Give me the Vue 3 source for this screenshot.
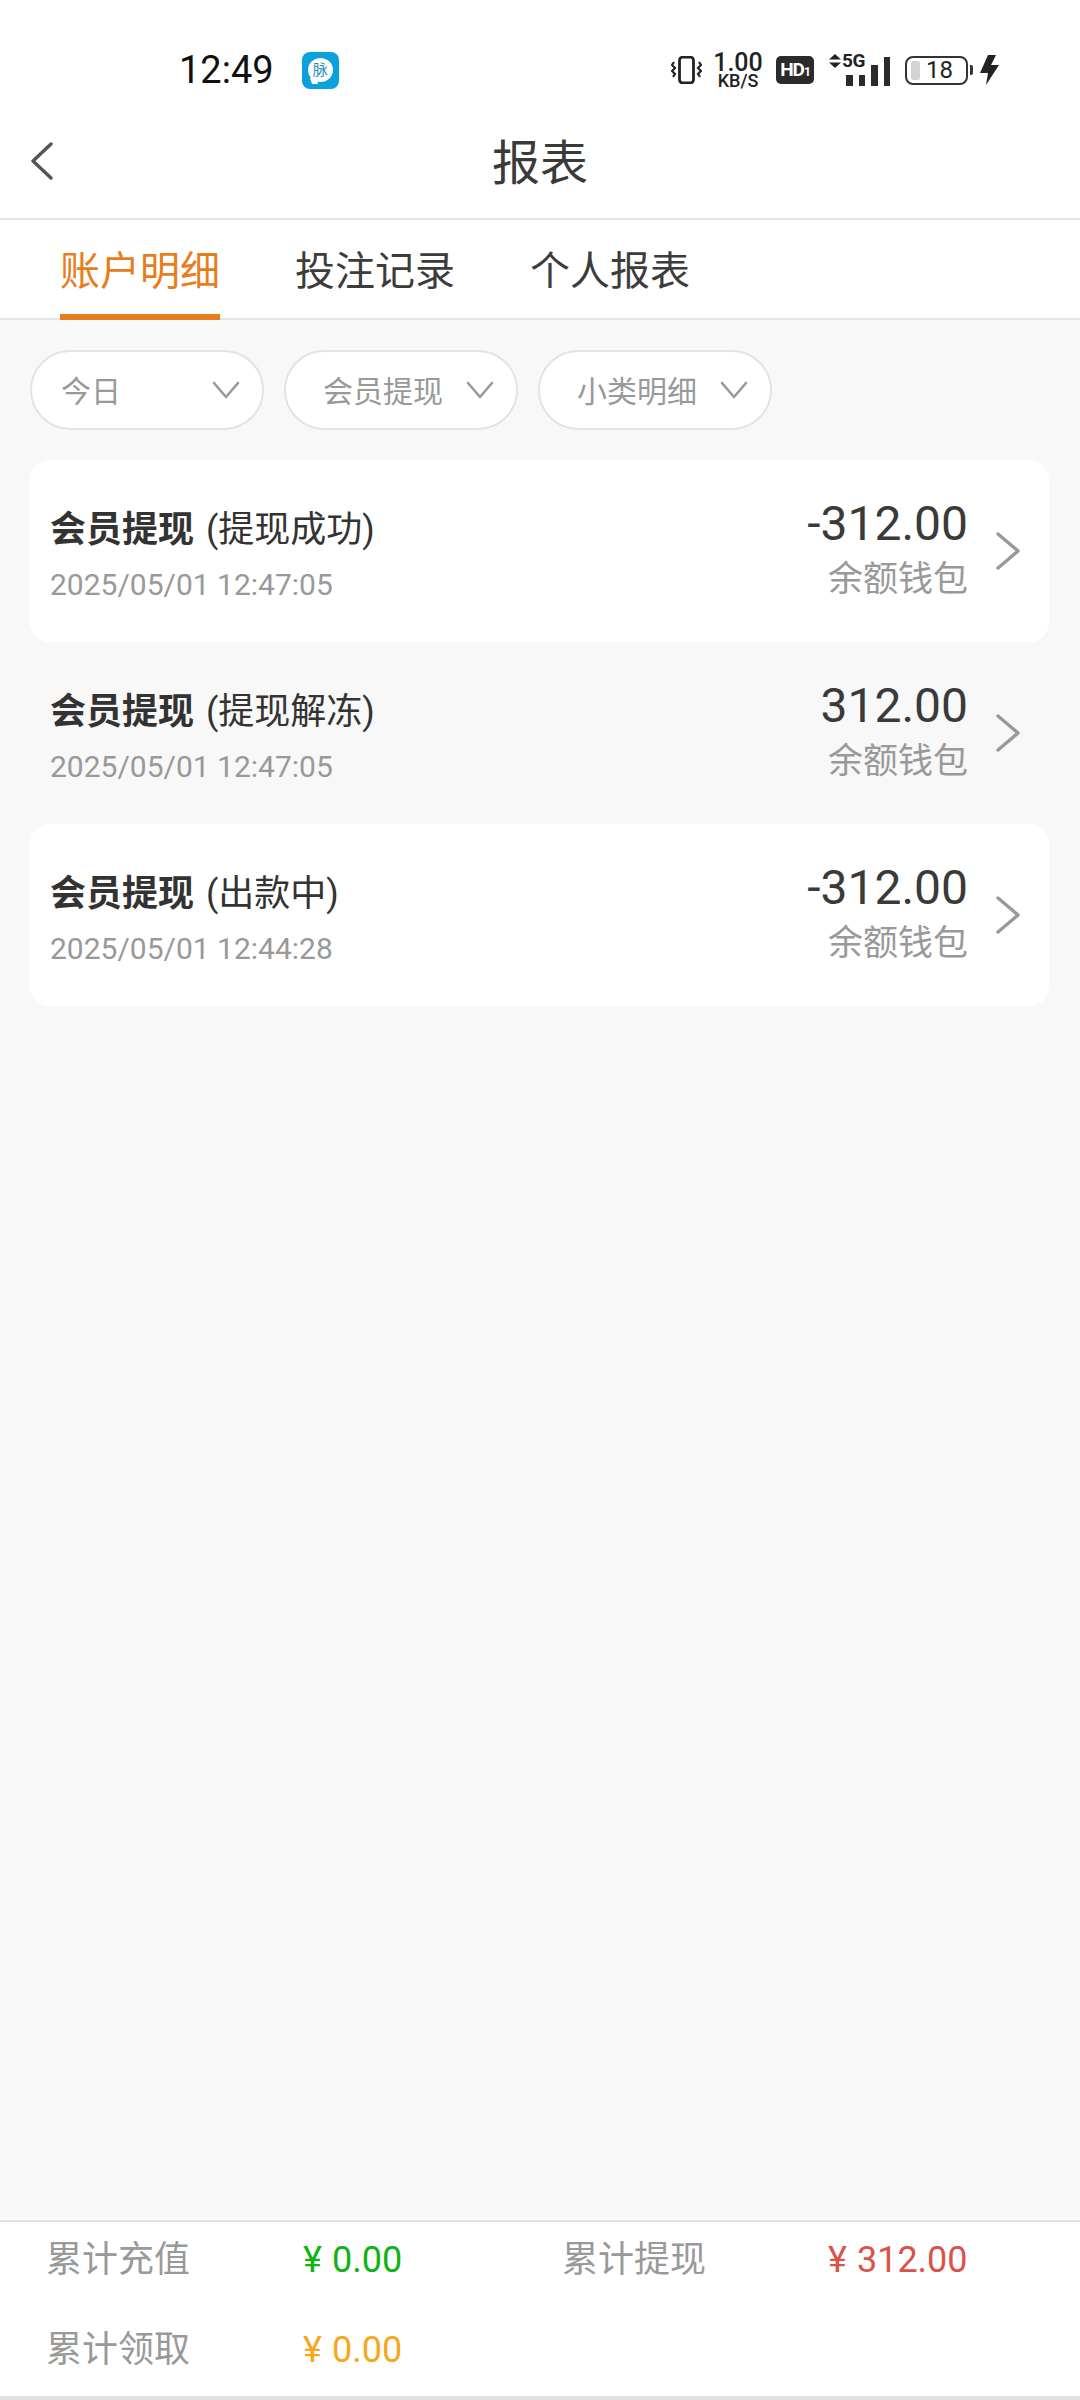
<template>
  <div class="page">
    <!-- Status bar -->
    <div class="status-bar">
      <div class="status-left">
        <span class="clock">12:49</span>
        <div class="app-icon">
          <div class="bubble">脉</div>
          <span class="bubble-tail"></span>
        </div>
      </div>
      <div class="status-right">
        <svg class="ic-vibrate" width="31" height="28" viewBox="0 0 31 28" fill="none" stroke="#222">
          <rect x="8.5" y="1.2" width="14" height="25.6" rx="3" stroke-width="2.8" />
          <path d="M3 6 L1 9 L4 12 L1 15 L4 18 L2 21" stroke-width="2.2" />
          <path d="M28 6 L30 9 L27 12 L30 15 L27 18 L29 21" stroke-width="2.2" />
        </svg>
        <div class="speed">
          <span class="speed-num">1.00</span>
          <span class="speed-unit">KB/S</span>
        </div>
        <div class="hd">HD<small>1</small></div>
        <div class="signal">
          <svg class="signal-arrows" width="12" height="14" viewBox="0 0 12 14" fill="#222">
            <path d="M6 0 L12 5.5 H0 Z" />
            <path d="M6 14 L12 8.5 H0 Z" />
          </svg>
          <span class="five-g">5G</span>
          <div class="bars">
            <i class="bar short"></i>
            <i class="bar short"></i>
            <i class="bar mid"></i>
            <i class="bar tall"></i>
          </div>
        </div>
        <div class="battery">
          <div class="battery-body">
            <i class="battery-fill"></i>
            <span>18</span>
          </div>
          <i class="battery-cap"></i>
        </div>
        <svg class="ic-bolt" width="20" height="30" viewBox="0 0 20 30" fill="#222">
          <path d="M8 0 L0 18 H8 L6 30 L19 10 H11 L16 0 Z" />
        </svg>
      </div>
    </div>

    <!-- Header -->
    <header class="nav">
      <svg class="back" width="24" height="38" viewBox="0 0 24 38" fill="none">
        <path d="M21 2 L3 19 L21 36" stroke="#555" stroke-width="3.4" stroke-linecap="round" stroke-linejoin="round" />
      </svg>
      <h1 class="nav-title">报表</h1>
    </header>

    <!-- Tabs -->
    <div class="tabs">
      <div
        v-for="(tab, index) in tabs"
        :key="tab"
        class="tab"
        :class="{ active: index === 0 }"
      >
        {{ tab }}
      </div>
    </div>

    <main class="content">
      <!-- Filters -->
      <div class="filters">
        <div v-for="f in filters" :key="f.label" class="pill" :class="{ wide: f.wide }">
          <span class="pill-text">{{ f.label }}</span>
          <svg width="28" height="18" viewBox="0 0 28 18" fill="none">
            <path d="M2 2 L14 16 L26 2" stroke="#999" stroke-width="2.6" stroke-linecap="round" stroke-linejoin="round" />
          </svg>
        </div>
      </div>

      <!-- Records -->
      <div class="list">
        <div
          v-for="(row, index) in rows"
          :key="index"
          class="record"
          :class="{ plain: index % 2 === 1 }"
        >
          <div class="record-main">
            <div class="record-title"><b>会员提现</b> <span class="record-status">({{ row.status }})</span></div>
            <div class="record-date">{{ row.date }}</div>
          </div>
          <div class="record-side">
            <div class="record-amount">{{ row.amount }}</div>
            <div class="record-wallet">余额钱包</div>
          </div>
          <svg class="record-arrow" width="26" height="40" viewBox="0 0 26 40" fill="none">
            <path d="M3 3 L23 20 L3 37" stroke="#999" stroke-width="3.4" stroke-linecap="round" stroke-linejoin="round" />
          </svg>
        </div>
      </div>
    </main>

    <!-- Totals -->
    <footer class="totals">
      <div v-for="t in totals" :key="t.label" class="total">
        <span class="total-label">{{ t.label }}</span>
        <span class="total-value" :class="t.tone"><span class="yen">¥</span>{{ t.value }}</span>
      </div>
    </footer>
  </div>
</template>

<script setup>
const tabs = ['账户明细', '投注记录', '个人报表']

const filters = [
  { label: '今日', wide: true },
  { label: '会员提现' },
  { label: '小类明细' },
]

const rows = [
  { status: '提现成功', date: '2025/05/01 12:47:05', amount: '-312.00' },
  { status: '提现解冻', date: '2025/05/01 12:47:05', amount: '312.00' },
  { status: '出款中', date: '2025/05/01 12:44:28', amount: '-312.00' },
]

const totals = [
  { label: '累计充值', value: '0.00', tone: 'green' },
  { label: '累计提现', value: '312.00', tone: 'red' },
  { label: '累计领取', value: '0.00', tone: 'amber' },
]
</script>

<style>
html,
body {
  margin: 0;
  background: #fff;
}
</style>

<style scoped>
.page {
  width: 1080px;
  height: 2400px;
  display: flex;
  flex-direction: column;
  background: #f8f8f8;
  font-family: Roboto, "Noto Sans CJK SC", sans-serif;
  color: #333;
  overflow: hidden;
}

/* Status bar */
.status-bar {
  height: 100px;
  flex: none;
  box-sizing: border-box;
  padding: 40px 80px 0 179px;
  display: flex;
  align-items: center;
  justify-content: space-between;
  background: #fff;
}

.status-left {
  display: flex;
  align-items: center;
  gap: 28px;
}

.clock {
  font-size: 38px;
  color: #111;
  line-height: 1;
}

.app-icon {
  width: 37px;
  height: 37px;
  border-radius: 8px;
  background: #0aa2dd;
  display: flex;
  align-items: center;
  justify-content: center;
  position: relative;
}

.bubble {
  width: 25px;
  height: 24px;
  border-radius: 50%;
  background: #fff;
  color: #2b8fb8;
  font-size: 15px;
  line-height: 24px;
  text-align: center;
}

.bubble-tail {
  position: absolute;
  left: 9px;
  bottom: 5px;
  width: 6px;
  height: 6px;
  background: #fff;
  transform: skewX(20deg);
}

.status-right {
  display: flex;
  align-items: center;
}

.ic-vibrate {
  margin-left: 1px;
}

.speed {
  margin-left: 12px;
  width: 48px;
  display: flex;
  flex-direction: column;
  align-items: center;
  color: #222;
}

.speed-num {
  font-size: 25px;
  line-height: 21px;
  font-weight: 500;
}

.speed-unit {
  font-size: 18px;
  line-height: 16px;
  font-weight: 500;
}

.hd {
  margin-left: 14px;
  width: 38px;
  height: 28px;
  border-radius: 5px;
  background: #2b2b2b;
  color: #fff;
  font-size: 19px;
  line-height: 28px;
  font-weight: 700;
  text-align: center;
  letter-spacing: -1px;
}

.hd small {
  font-size: 12px;
}

.signal {
  position: relative;
  margin-left: 15px;
  width: 61px;
  height: 32px;
}

.signal-arrows {
  position: absolute;
  left: 0;
  top: 0;
}

.five-g {
  position: absolute;
  left: 13px;
  top: -3px;
  font-size: 19px;
  line-height: 20px;
  font-weight: 700;
  color: #222;
  letter-spacing: -0.5px;
}

.bars {
  position: absolute;
  left: 17px;
  right: 0;
  bottom: 0;
  display: flex;
  align-items: flex-end;
  gap: 6px;
}

.bar {
  width: 7px;
  background: #2b2b2b;
}

.bar.short {
  height: 11px;
}

.bar.mid {
  height: 21px;
}

.bar.tall {
  height: 29px;
}

.battery {
  margin-left: 15px;
  display: flex;
  align-items: center;
  gap: 2px;
}

.battery-body {
  position: relative;
  width: 63px;
  height: 29px;
  box-sizing: border-box;
  border: 2px solid #333;
  border-radius: 8px;
  font-size: 24px;
  line-height: 25px;
  text-align: center;
  color: #222;
  padding-left: 6px;
}

.battery-fill {
  position: absolute;
  left: 4px;
  top: 3px;
  bottom: 3px;
  width: 9px;
  background: #d4d4d4;
  border-radius: 2px;
}

.battery-cap {
  width: 3px;
  height: 10px;
  background: #333;
  border-radius: 0 2px 2px 0;
}

.ic-bolt {
  margin-left: 7px;
}

/* Header */
.nav {
  height: 120px;
  flex: none;
  box-sizing: border-box;
  background: #fff;
  border-bottom: 2px solid #e4e4e4;
  display: flex;
  align-items: center;
  justify-content: center;
  position: relative;
}

.back {
  position: absolute;
  left: 30px;
  top: 42px;
}

.nav-title {
  margin: 10px 0 0;
  font-size: 48px;
  font-weight: 400;
  color: #3a3a3a;
  line-height: 1;
}

/* Tabs */
.tabs {
  height: 100px;
  flex: none;
  box-sizing: border-box;
  background: #fff;
  border-bottom: 2px solid #e4e4e4;
  padding-left: 60px;
  display: flex;
  gap: 75px;
}

.tab {
  height: 100px;
  box-sizing: border-box;
  padding-top: 27px;
  font-size: 40px;
  line-height: 50px;
  color: #3c3c3c;
  border-bottom: 6px solid transparent;
}

.tab.active {
  color: #e67e1e;
  border-bottom-color: #e67e1e;
}

/* Filters */
.content {
  flex: 1;
  box-sizing: border-box;
  padding: 30px 31px 0 30px;
}

.filters {
  display: flex;
  gap: 20px;
}

.pill {
  width: 234px;
  height: 80px;
  box-sizing: border-box;
  border: 2px solid #e3e3e3;
  border-radius: 40px;
  background: #fff;
  padding: 0 22px 0 37px;
  display: flex;
  align-items: center;
  justify-content: space-between;
  font-size: 30px;
  color: #999;
}

.pill-text {
  margin-top: -2px;
}

.pill.wide {
  padding-left: 29px;
}

/* Records */
.list {
  margin-top: 30px;
  display: flex;
  flex-direction: column;
}

.record {
  height: 182px;
  box-sizing: border-box;
  padding: 0 28px 0 20px;
  border-radius: 20px;
  background: #fff;
  display: flex;
  align-items: center;
}

.record.plain {
  background: transparent;
}

.record-main {
  flex: 1;
  padding-top: 6px;
}

.record-title {
  font-size: 36px;
  line-height: 50px;
  color: #333;
}

.record-title b {
  font-weight: 700;
}

.record-status {
  margin-left: 3px;
}

.record-date {
  margin-top: 12px;
  font-size: 30px;
  line-height: 36px;
  color: #999;
}

.record-side {
  text-align: right;
  margin-top: -3px;
}

.record-amount {
  font-size: 48px;
  line-height: 56px;
  color: #3a3a3a;
}

.record-wallet {
  margin-top: 5px;
  font-size: 35px;
  line-height: 46px;
  color: #999;
}

.record-arrow {
  margin-left: 27px;
}

/* Totals */
.totals {
  height: 180px;
  flex: none;
  box-sizing: border-box;
  background: #fff;
  border-top: 2px solid #e2e2e2;
  border-bottom: 4px solid #e2e2e2;
  padding: 10px 0 0 46px;
  display: grid;
  grid-template-columns: 516px 1fr;
  grid-auto-rows: 90px;
}

.total {
  display: flex;
  align-items: flex-start;
  font-size: 36px;
  line-height: 56px;
}

.total-label {
  width: 257px;
  color: #999;
}

.total-value {
  font-size: 36px;
}

.yen {
  margin-right: 10px;
}

.total:nth-child(2) .total-label {
  width: 266px;
}

.green {
  color: #0fb312;
}

.red {
  color: #d9534a;
}

.amber {
  color: #f5a81c;
}
</style>
